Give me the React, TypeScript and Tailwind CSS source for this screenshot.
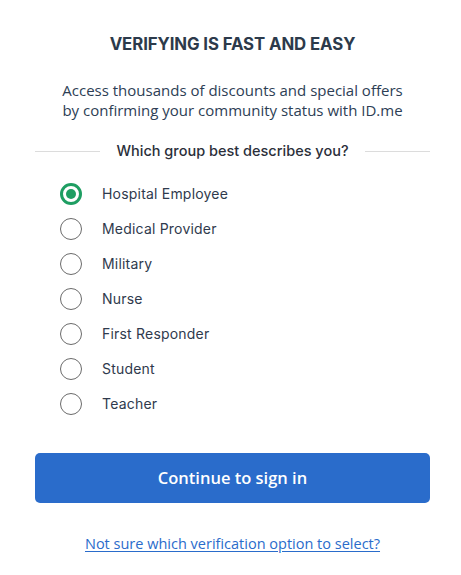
import React, { useState } from "react";

const groups = [
  "Hospital Employee",
  "Medical Provider",
  "Military",
  "Nurse",
  "First Responder",
  "Student",
  "Teacher",
];

const Radio: React.FC<{ checked: boolean }> = ({ checked }) =>
  checked ? (
    <span className="flex h-[22px] w-[22px] items-center justify-center rounded-full border-[3px] border-[#1e9e62] bg-white">
      <span className="h-[10px] w-[10px] rounded-full bg-[#1e9e62]" />
    </span>
  ) : (
    <span className="h-[22px] w-[22px] rounded-full border border-[#6b6b6b] bg-white" />
  );

export default function App() {
  const [selected, setSelected] = useState(0);

  return (
    <div className="min-h-[575px] w-[461px] bg-white font-['Open_Sans',sans-serif] text-[#2d3b4e]">
      <div className="ml-[35px] w-[395px] pt-[33px]">
        <h1 className="text-center font-['Inter',sans-serif] text-[16.8px] font-bold leading-[22px] tracking-[-0.1px] text-[#2c3a4b]">
          VERIFYING IS FAST AND EASY
        </h1>
        <p className="mt-[25px] text-center text-[15px] leading-[20px] text-[#2d3e55]">
          Access thousands of discounts and special offers
          <br />
          by confirming your community status with ID.me
        </p>
        <div className="mt-[21px] flex items-center gap-4">
          <div className="h-px flex-1 bg-[#dcdcdc]" />
          <span className="font-['Inter',sans-serif] text-[14.5px] font-medium leading-5 text-[#2b2f3a]">
            Which group best describes you?
          </span>
          <div className="h-px flex-1 bg-[#dcdcdc]" />
        </div>
        <ul className="mt-[15px] flex flex-col pl-[25px]">
          {groups.map((g, i) => (
            <li
              key={g}
              onClick={() => setSelected(i)}
              className="flex h-[35px] cursor-pointer items-center gap-[20px]"
            >
              <Radio checked={i === selected} />
              <span className="font-['Inter',sans-serif] text-[14px] leading-5 tracking-[0.2px] text-[#2f3a4d]">
                {g}
              </span>
            </li>
          ))}
        </ul>
        <button className="mt-[32px] flex h-[50px] w-full items-center justify-center rounded-[5px] bg-[#2a6ccb] text-[16.5px] font-semibold text-white">
          Continue to sign in
        </button>
        <div className="mt-[28px] text-center">
          <a
            href="#"
            className="text-[14.5px] leading-5 text-[#2a6ccb] underline underline-offset-2"
          >
            Not sure which verification option to select?
          </a>
        </div>
      </div>
    </div>
  );
}
